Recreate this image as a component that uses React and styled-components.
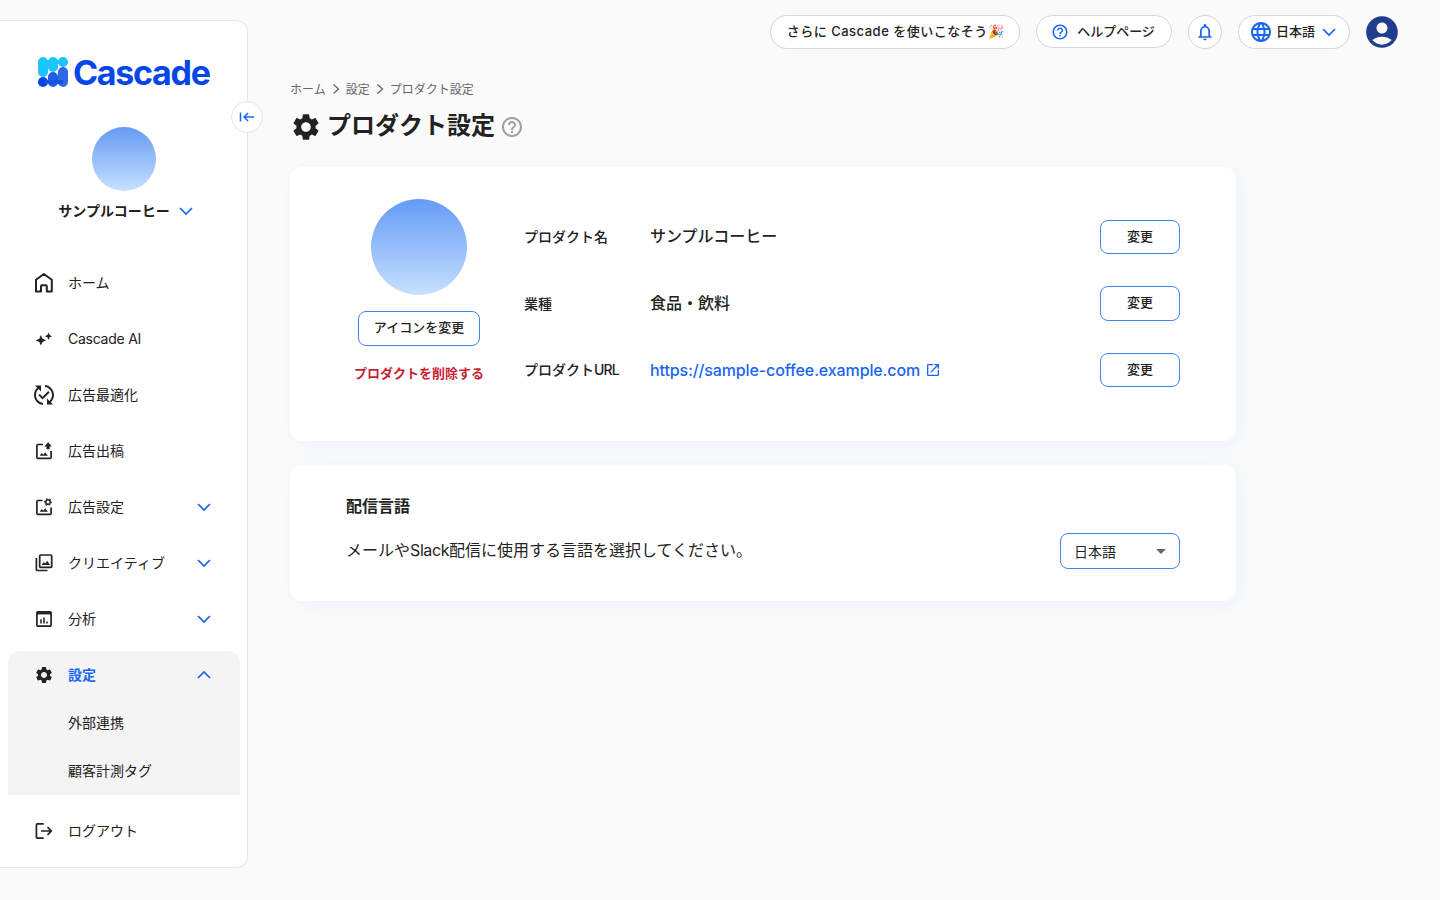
import React, { useState } from 'react';
import styled, { createGlobalStyle } from 'styled-components';
import {
  MdSettings,
  MdHelpOutline,
  MdNotificationsNone,
  MdLanguage,
  MdAccountCircle,
  MdArrowDropDown,
  MdPublishedWithChanges,
  MdOpenInNew,
} from 'react-icons/md';

const blue = '#1865f2';

const GlobalStyle = createGlobalStyle`
  * {
    box-sizing: border-box;
  }

  body {
    margin: 0;
    background: #fafafa;
    color: #222;
    font-family: Inter, 'Noto Sans CJK JP', sans-serif;
    font-size: 14px;
  }

  button {
    font-family: inherit;
    color: inherit;
    cursor: pointer;
  }
`;

const Page = styled.div`
  display: flex;
  align-items: flex-start;
  width: 1440px;
  height: 900px;
  overflow: hidden;
`;

const Sidebar = styled.aside`
  position: relative;
  display: flex;
  flex-direction: column;
  flex: none;
  width: 248px;
  height: 848px;
  margin-top: 20px;
  background: #fff;
  border: 1px solid #e6e6e6;
  border-left: none;
  border-radius: 0 12px 12px 0;
`;

const Collapse = styled.button`
  position: absolute;
  top: 80px;
  right: -16px;
  display: flex;
  align-items: center;
  justify-content: center;
  width: 32px;
  height: 32px;
  padding: 0;
  background: #fff;
  border: 1px solid #e6e6e6;
  border-radius: 50%;
`;

const Logo = styled.div`
  display: flex;
  align-items: center;
  gap: 4px;
  height: 32px;
  margin: 35px 0 0 37px;
`;

const LogoText = styled.span`
  padding-top: 2px;
  font-family: Inter, sans-serif;
  font-size: 34px;
  line-height: 32px;
  font-weight: 700;
  letter-spacing: -1.3px;
  color: #0546e8;
`;

const Avatar = styled.div`
  width: ${props => props.size}px;
  height: ${props => props.size}px;
  border-radius: 50%;
  background: linear-gradient(#669af5, #c5e1ff);
`;

const Profile = styled.div`
  display: flex;
  flex-direction: column;
  align-items: center;
  margin-top: 39px;
`;

const ProfileName = styled.div`
  display: flex;
  align-items: center;
  gap: 8px;
  height: 24px;
  margin-top: 7px;
  padding-left: 5px;
  font-weight: 700;

  svg {
    margin-top: 2px;
  }
`;

const Nav = styled.nav`
  display: flex;
  flex-direction: column;
  margin-top: 33px;
  padding: 0 7px 0 8px;
`;

const NavItem = styled.div`
  display: flex;
  align-items: center;
  height: ${props => (props.$active ? 48 : 56)}px;
  padding: 0 28px 0 24px;
  line-height: 20px;
  color: ${props => (props.$active ? blue : '#222')};
  font-weight: ${props => (props.$active ? 700 : 400)};

  & > svg:first-child {
    margin-right: 12px;
    color: #222;
  }

  & > svg:last-child {
    margin-left: auto;
  }
`;

const NavGroup = styled.div`
  background: #f4f4f4;
  border-radius: 12px 12px 0 0;
  margin: 4px 0 8px;
`;

const NavGear = styled(MdSettings)`
  width: 24px;
  height: 24px;
  padding: 2px;
`;

const SubItem = styled.div`
  display: flex;
  align-items: center;
  height: 48px;
  padding: 0 0 2px 60px;
`;

const Latin = styled.span`
  letter-spacing: ${props => props.$spacing}px;
`;

const Main = styled.main`
  flex: 1;
  display: flex;
  flex-direction: column;
  padding: 15px 42px 0;
`;

const TopBar = styled.header`
  display: flex;
  justify-content: flex-end;
  gap: 16px;
  height: 34px;
`;

const Pill = styled.button`
  display: flex;
  align-items: center;
  justify-content: center;
  flex: none;
  width: ${props => props.$width}px;
  height: ${props => props.$height || 34}px;
  padding: 0 ${props => props.$end || 0}px 0 0;
  background: #fff;
  border: 1px solid #d6d6d6;
  border-radius: 17px;
  font-size: 13px;
  line-height: 18px;
  font-weight: 500;
  letter-spacing: ${props => props.$spacing || 0}px;
`;

const PillText = styled.span`
  margin: 0 ${props => props.$right || 0}px 0 ${props => props.$left || 0}px;
  padding-bottom: 2px;
  white-space: nowrap;
`;

const UserIcon = styled.div`
  display: flex;
  align-items: center;
  justify-content: center;
  width: 32px;
  height: 32px;
  margin-top: 1px;
  color: #203c8c;

  svg {
    flex: none;
  }
`;

const Breadcrumb = styled.div`
  display: flex;
  align-items: center;
  height: 20px;
  margin-top: 29px;
  font-size: 12px;
  color: #666;

  svg {
    margin: 2px 5px 0;
  }
`;

const Title = styled.h1`
  display: flex;
  align-items: center;
  height: 36px;
  margin: 11px 0 0;
  font-size: 24px;
  line-height: 36px;
  font-weight: 700;

  span {
    margin: 0 5px 2px;
  }
`;

const Card = styled.section`
  display: flex;
  width: 946px;
  height: ${props => props.$height}px;
  margin-top: ${props => props.$top}px;
  background: #fff;
  border-radius: 12px;
  box-shadow: 4px 4px 20px rgba(55, 135, 255, 0.07);
`;

const IconColumn = styled.div`
  display: flex;
  flex-direction: column;
  align-items: center;
  width: 146px;
  margin: 32px 32px 0 56px;
`;

const OutlineButton = styled.button`
  width: ${props => props.$width}px;
  height: 34.5px;
  padding: 0 0 3px;
  background: #fff;
  border: 1px solid #4285ee;
  border-radius: 8px;
  font-size: 13px;
  line-height: 18px;
  font-weight: 500;
`;

const IconButton = styled(OutlineButton)`
  margin-top: 16px;
`;

const Delete = styled.a`
  margin-top: 17px;
  font-size: 13px;
  line-height: 20px;
  font-weight: 700;
  color: #c91f35;
`;

const Fields = styled.div`
  flex: 1;
  margin: 36.8px 56px 0 0;
`;

const Field = styled.div`
  display: grid;
  grid-template-columns: 126px 1fr 80px;
  align-items: center;
  height: 66.5px;
`;

const Label = styled.div`
  font-weight: 500;
  line-height: 20px;
`;

const Value = styled.div`
  padding-bottom: 2px;
  font-size: 16px;
  line-height: 24px;
  font-weight: 500;
`;

const Link = styled.a`
  display: flex;
  align-items: center;
  gap: 5px;
  font-size: 16px;
  line-height: 24px;
  font-weight: 500;
  letter-spacing: -0.12px;
  color: ${blue};
`;

const Language = styled.div`
  flex: 1;
  padding: 29px 56px 0;

  h2 {
    margin: 0;
    font-size: 16px;
    line-height: 24px;
    font-weight: 700;
  }
`;

const LanguageRow = styled.div`
  display: flex;
  align-items: center;
  justify-content: space-between;
  height: 36px;
  margin-top: 15px;
  font-size: 16px;

  p {
    margin: 0 0 4px;
  }
`;

const Select = styled.div`
  display: flex;
  align-items: center;
  justify-content: space-between;
  width: 120px;
  height: 36px;
  padding: 0 6px 0 13px;
  border: 1px solid #4285ee;
  border-radius: 8px;
  font-size: 14px;

  svg {
    color: #666;
  }
`;

const Chevron = ({ up }) => (
  <svg width="16" height="16" viewBox="0 0 16 16" fill="none" stroke={blue} strokeWidth="1.7">
    <path d={up ? 'M2 11l6-6 6 6' : 'M2 5l6 6 6-6'} />
  </svg>
);

const Crumb = () => (
  <svg width="10" height="12" viewBox="0 0 10 12" fill="none" stroke="#666" strokeWidth="1.3">
    <path d="M2.5 1.5l5 4.5-5 4.5" />
  </svg>
);

const LogoMark = () => (
  <svg width="32" height="32" viewBox="0 0 32 32">
    <rect x="1" y="21" width="10" height="10" rx="5" fill="#0546e8" />
    <rect x="11" y="16" width="10" height="15" rx="5" fill="#1d5de8" />
    <rect x="21" y="11" width="10" height="20" rx="5" fill="#2f69e5" />
    <path d="M8 24h18v4H8z" fill="#1254e4" />
    <rect x="1" y="1" width="10" height="20" rx="5" fill="#1bc6ff" />
    <rect x="11" y="1" width="10" height="15" rx="5" fill="#1bc6ff" />
    <rect x="21" y="1" width="10" height="10" rx="5" fill="#1bc6ff" />
    <path d="M6 4h20v4H6z" fill="#1bc6ff" />
  </svg>
);

const Icon = ({ children }) => (
  <svg width="24" height="24" viewBox="0 0 24 24" fill="none" stroke="currentColor" strokeWidth="1.7">
    {children}
  </svg>
);

const HomeIcon = () => (
  <Icon>
    <path strokeWidth="2" strokeLinejoin="round" d="M4 20.5V8.8l7.900-5.800 7.900 5.800v11.700h-5v-5.200a1 1 0 0 0-1-1H10a1 1 0 0 0-1 1v5.200z" />
  </Icon>
);

const SparkIcon = () => (
  <Icon>
    <path fill="currentColor" stroke="none" d="M8.900 8l1.600 3.700 3.700 1.600-3.700 1.600-1.600 3.700-1.600-3.700-3.700-1.600 3.700-1.600zM16.500 5.500l1.100 2.600 2.600 1.100-2.600 1.100-1.100 2.600-1.100-2.600-2.600-1.100 2.600-1.100z" />
  </Icon>
);

const PublishIcon = () => (
  <Icon>
    <path d="M11 5.500H5.900a1 1 0 0 0-1 1v11.800a1 1 0 0 0 1 1h12.200a1 1 0 0 0 1-1V12" />
    <path fill="currentColor" stroke="none" d="M7.700 16.700l2.100-2.700 1.500 1.700 1.900-2.500 2.700 3.500zM14.500 10.200V7.500h-2.200L16.100 3.300l3.800 4.200h-2.200v2.700z" />
  </Icon>
);

const AdSettingIcon = () => (
  <Icon>
    <path d="M10.500 5.500H5.900a1 1 0 0 0-1 1v11.800a1 1 0 0 0 1 1h12.200a1 1 0 0 0 1-1V12.500" />
    <path fill="currentColor" stroke="none" d="M7.700 16.700l2.100-2.700 1.500 1.700 1.900-2.500 2.700 3.500z" />
    <circle cx="16" cy="7" r="2.300" strokeWidth="1.500" />
    <circle cx="16" cy="7" r="3.300" strokeWidth="1.200" strokeDasharray="1.600 1.856" strokeDashoffset="0.800" />
  </Icon>
);

const CreativeIcon = () => (
  <Icon>
    <rect x="7.700" y="4" width="12" height="12.400" rx="1" />
    <path d="M4.400 7v11.500a1 1 0 0 0 1 1H15.500" />
    <path fill="currentColor" stroke="none" d="M9.700 14l2-3 1.500 1.500 1.900-2.800 3 4.300z" />
  </Icon>
);

const AnalysisIcon = () => (
  <Icon>
    <rect x="4.900" y="4.900" width="14.200" height="14.200" rx="1" />
    <path strokeWidth="2.200" d="M5 6.300h14" />
    <path strokeWidth="1.500" d="M9 16.500v-4.300M12 16.500V10.500M15 16.500v-2" />
  </Icon>
);

const LogoutIcon = () => (
  <Icon>
    <path d="M11.700 4.900H5.400a1 1 0 0 0-1 1v12.200a1 1 0 0 0 1 1h6.300M9 12h10.300M15.500 8.200l3.800 3.800-3.800 3.800" />
  </Icon>
);

const CollapseIcon = () => (
  <svg width="16" height="16" viewBox="0 0 16 16" fill="none" stroke={blue} strokeWidth="1.5">
    <path d="M1.500 3.500v9M15 8H5M9 4L5 8l4 4" />
  </svg>
);

const menu = [
  { label: 'ホーム', icon: HomeIcon },
  { label: 'Cascade AI', icon: SparkIcon, spacing: -0.25 },
  { label: '広告最適化', icon: () => <MdPublishedWithChanges size={24} /> },
  { label: '広告出稿', icon: PublishIcon },
  { label: '広告設定', icon: AdSettingIcon, more: true },
  { label: 'クリエイティブ', icon: CreativeIcon, more: true },
  { label: '分析', icon: AnalysisIcon, more: true },
];

function App () {
  const [open, setOpen] = useState(true);

  return (
    <Page>
      <GlobalStyle />
      <Sidebar>
        <Collapse><CollapseIcon /></Collapse>
        <Logo>
          <LogoMark />
          <LogoText>Cascade</LogoText>
        </Logo>
        <Profile>
          <Avatar size={64} />
          <ProfileName>サンプルコーヒー<Chevron /></ProfileName>
        </Profile>
        <Nav>
          {menu.map(item => (
            <NavItem key={item.label}>
              <item.icon />
              <Latin $spacing={item.spacing || 0}>{item.label}</Latin>
              {item.more && <Chevron />}
            </NavItem>
          ))}
          <NavGroup>
            <NavItem $active onClick={() => setOpen(!open)}>
              <NavGear />
              <span>設定</span>
              <Chevron up={open} />
            </NavItem>
            {open && <SubItem>外部連携</SubItem>}
            {open && <SubItem>顧客計測タグ</SubItem>}
          </NavGroup>
          <NavItem>
            <LogoutIcon />
            <span>ログアウト</span>
          </NavItem>
        </Nav>
      </Sidebar>

      <Main>
        <TopBar>
          <Pill $width={250} $spacing={0.5}>
            <PillText $left={1}>さらに Cascade を使いこなそう🎉</PillText>
          </Pill>
          <Pill $width={136} $height={33}>
            <MdHelpOutline size={18} color={blue} />
            <PillText $left={8} $right={2}>ヘルプページ</PillText>
          </Pill>
          <Pill $width={34}><MdNotificationsNone size={20} color={blue} /></Pill>
          <Pill $width={112} $end={2}>
            <MdLanguage size={24} color={blue} />
            <PillText $left={3} $right={6}>日本語</PillText>
            <Chevron />
          </Pill>
          <UserIcon><MdAccountCircle size={38} /></UserIcon>
        </TopBar>

        <Breadcrumb>
          ホーム<Crumb />設定<Crumb />プロダクト設定
        </Breadcrumb>
        <Title>
          <MdSettings size={32} />
          <span>プロダクト設定</span>
          <MdHelpOutline size={24} color="#9e9e9e" />
        </Title>

        <Card $height={274} $top={22}>
          <IconColumn>
            <Avatar size={96} />
            <IconButton $width={122}>アイコンを変更</IconButton>
            <Delete>プロダクトを削除する</Delete>
          </IconColumn>
          <Fields>
            <Field>
              <Label>プロダクト名</Label>
              <Value>サンプルコーヒー</Value>
              <OutlineButton $width={80}>変更</OutlineButton>
            </Field>
            <Field>
              <Label>業種</Label>
              <Value>食品・飲料</Value>
              <OutlineButton $width={80}>変更</OutlineButton>
            </Field>
            <Field>
              <Label>プロダクト<Latin $spacing={-0.8}>URL</Latin></Label>
              <Link>
                https://sample-coffee.example.com
                <MdOpenInNew size={16} />
              </Link>
              <OutlineButton $width={80}>変更</OutlineButton>
            </Field>
          </Fields>
        </Card>

        <Card $height={136} $top={24}>
          <Language>
            <h2>配信言語</h2>
            <LanguageRow>
              <p>メールや<Latin $spacing={-0.4}>Slack</Latin>配信に使用する言語を選択してください。</p>
              <Select>日本語<MdArrowDropDown size={24} /></Select>
            </LanguageRow>
          </Language>
        </Card>
      </Main>
    </Page>
  );
}

export default App;
